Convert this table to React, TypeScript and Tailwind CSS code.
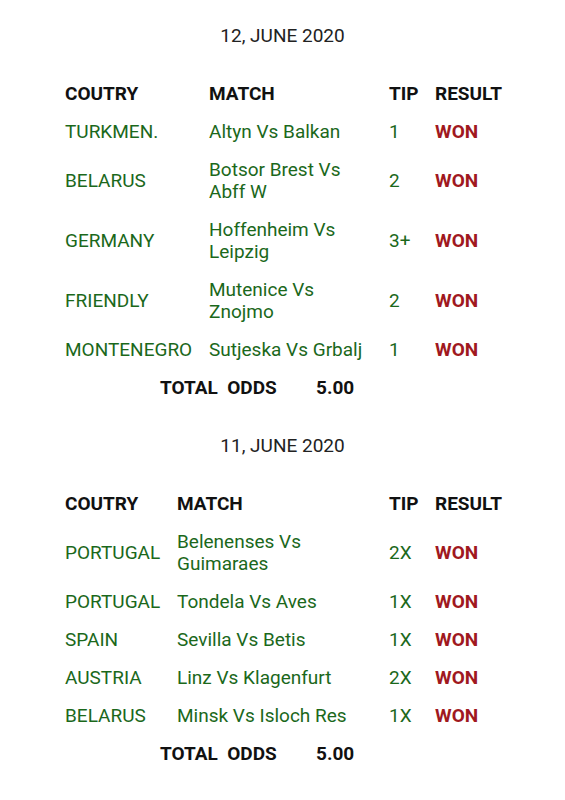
import React from "react";

type Row = { c: string; m: string; t: string };

const day1: Row[] = [
  { c: "TURKMEN.", m: "Altyn Vs Balkan", t: "1" },
  { c: "BELARUS", m: "Botsor Brest Vs Abff W", t: "2" },
  { c: "GERMANY", m: "Hoffenheim Vs Leipzig", t: "3+" },
  { c: "FRIENDLY", m: "Mutenice Vs Znojmo", t: "2" },
  { c: "MONTENEGRO", m: "Sutjeska Vs Grbalj", t: "1" },
];

const day2: Row[] = [
  { c: "PORTUGAL", m: "Belenenses Vs Guimaraes", t: "2X" },
  { c: "PORTUGAL", m: "Tondela Vs Aves", t: "1X" },
  { c: "SPAIN", m: "Sevilla Vs Betis", t: "1X" },
  { c: "AUSTRIA", m: "Linz Vs Klagenfurt", t: "2X" },
  { c: "BELARUS", m: "Minsk Vs Isloch Res", t: "1X" },
];

function Table({ rows, cols }: { rows: Row[]; cols: string }) {
  return (
    <div className={`grid ${cols} items-center pl-[65px] pr-[20px]`}>
      <div className="py-2 font-bold text-[#111]">COUTRY</div>
      <div className="py-2 pr-4 font-bold text-[#111]">MATCH</div>
      <div className="py-2 font-bold text-[#111]">TIP</div>
      <div className="py-2 font-bold text-[#111]">RESULT</div>
      {rows.map((r, i) => (
        <React.Fragment key={i}>
          <div className="py-2 text-[#1b681b] whitespace-nowrap">{r.c}</div>
          <div className="py-2 pr-4 text-[#1b681b]">{r.m}</div>
          <div className="py-2 text-[#1b681b]">{r.t}</div>
          <div className="py-2 font-bold text-[#a01820]">WON</div>
        </React.Fragment>
      ))}
    </div>
  );
}

function Total() {
  return (
    <div className="flex py-2 pl-[160px] font-bold text-[#111]">
      <span className="w-[156px] whitespace-pre">TOTAL  ODDS</span>
      <span>5.00</span>
    </div>
  );
}

export default function App() {
  return (
    <div className="w-[565px] min-h-[800px] bg-white pt-[25px] font-['Roboto',sans-serif] text-[19px] leading-[22px]">
      <div className="text-center text-[#222]">12, JUNE 2020</div>
      <div className="mt-7">
        <Table rows={day1} cols="grid-cols-[144px_180px_46px_1fr]" />
        <Total />
      </div>
      <div className="mt-7 text-center text-[#222]">11, JUNE 2020</div>
      <div className="mt-7">
        <Table rows={day2} cols="grid-cols-[112px_212px_46px_1fr]" />
        <Total />
      </div>
    </div>
  );
}
